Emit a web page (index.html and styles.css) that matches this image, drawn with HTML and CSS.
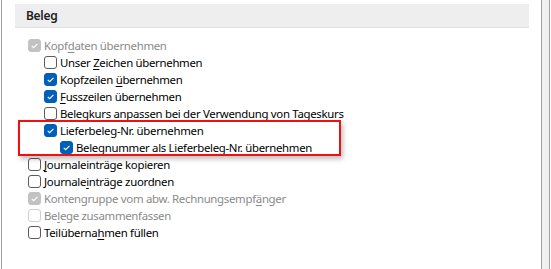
FILE: index.html
```html
<!DOCTYPE html>
<html lang="de">
<head>
    <meta charset="UTF-8">
    <title>Beleg</title>
    <link rel="stylesheet" href="styles.css">
</head>
<body>
    <div class="page">
        <div class="content">
            <div class="section-head">Beleg</div>
            <div class="options">
                <label class="opt disabled">
                    <span class="box checked"><svg viewBox="0 0 12 12"><path d="M3 6.3 L5.1 8.4 L9.2 4.1"/></svg></span>
                    <span>Kopf<u>d</u>aten übernehmen</span>
                </label>
                <label class="opt level-2">
                    <span class="box"></span>
                    <span>Unser <u>Z</u>eichen übernehmen</span>
                </label>
                <label class="opt level-2">
                    <span class="box checked"><svg viewBox="0 0 12 12"><path d="M3 6.3 L5.1 8.4 L9.2 4.1"/></svg></span>
                    <span>Kopfzeilen <u>ü</u>bernehmen</span>
                </label>
                <label class="opt level-2">
                    <span class="box checked"><svg viewBox="0 0 12 12"><path d="M3 6.3 L5.1 8.4 L9.2 4.1"/></svg></span>
                    <span><u>F</u>usszeilen übernehmen</span>
                </label>
                <label class="opt level-2">
                    <span class="box"></span>
                    <span>Bele<u>g</u>kurs anpassen bei der Verwendung von Tageskurs</span>
                </label>
                <div class="marked">
                    <label class="opt level-2">
                        <span class="box checked"><svg viewBox="0 0 12 12"><path d="M3 6.3 L5.1 8.4 L9.2 4.1"/></svg></span>
                        <span>Lieferbeleg-Nr. übernehmen</span>
                    </label>
                    <label class="opt level-3">
                        <span class="box checked"><svg viewBox="0 0 12 12"><path d="M3 6.3 L5.1 8.4 L9.2 4.1"/></svg></span>
                        <span>Belegnummer als Lieferbeleg-Nr. übernehmen</span>
                    </label>
                </div>
                <label class="opt">
                    <span class="box"></span>
                    <span><u>J</u>ournaleinträge kopieren</span>
                </label>
                <label class="opt">
                    <span class="box"></span>
                    <span>Journale<u>i</u>nträge zuordnen</span>
                </label>
                <label class="opt disabled">
                    <span class="box checked"><svg viewBox="0 0 12 12"><path d="M3 6.3 L5.1 8.4 L9.2 4.1"/></svg></span>
                    <span>Kontengruppe vom abw. Rechnungsempf<u>ä</u>nger</span>
                </label>
                <label class="opt disabled">
                    <span class="box"></span>
                    <span>Be<u>l</u>ege zusammenfassen</span>
                </label>
                <label class="opt">
                    <span class="box"></span>
                    <span>Teilüberna<u>h</u>men füllen</span>
                </label>
            </div>
        </div>
        <div class="strip"></div>
    </div>
</body>
</html>
```
FILE: styles.css
```css
body {
    margin: 0;
    padding-left: 1px;
    background-color: #fff;
    font-family: "Noto Sans", "Open Sans", sans-serif;
    font-size: 11.4px;
    letter-spacing: -0.3px;
    color: #000;
}
.page {
    display: flex;
    height: 269px;
}
.content {
    flex: 1;
    border-left: 1px solid #a0a0a0;
    padding: 4px 12px 0 0;
}
.strip {
    width: 7px;
    background-color: #f0f0f0;
    border-left: 1px solid #a0a0a0;
    border-right: 1px solid #a0a0a0;
    margin-right: 1px;
}
.section-head {
    margin-left: 13px;
    height: 23px;
    line-height: 23px;
    padding-left: 11px;
    background-color: #eeeeee;
    border-bottom: 1px solid #e0e0e0;
    font-size: 12px;
    font-weight: 600;
    color: #222;
}
.options {
    margin-top: 9px;
    padding-left: 26px;
}
.opt {
    display: flex;
    align-items: center;
    height: 17px;
    gap: 3px;
    white-space: nowrap;
}
.opt u {
    text-underline-offset: 2px;
}
.level-2 {
    margin-left: 16px;
}
.level-3 {
    margin-left: 32px;
}
.box {
    width: 13px;
    height: 13px;
    box-sizing: border-box;
    border: 1px solid #5b5b5b;
    border-radius: 3px;
    background-color: #fff;
    display: flex;
    flex-shrink: 0;
}
.box svg {
    width: 11px;
    height: 11px;
    margin: auto;
    fill: none;
    stroke: #fff;
    stroke-width: 1.2;
}
.box.checked {
    background-color: #005fb8;
    border-color: #005fb8;
}
.disabled {
    color: #8a8a8a;
}
.disabled .box {
    border-color: #cfcfcf;
}
.disabled .box.checked {
    background-color: #c2c2c2;
    border-color: #c2c2c2;
}
.marked {
    position: relative;
}
.marked::after {
    content: "";
    position: absolute;
    left: -10px;
    top: -2px;
    width: 323px;
    height: 36px;
    box-sizing: border-box;
    border: 2px solid #ee1111;
    box-shadow: 2px 3px 5px rgba(0, 0, 0, 0.25);
}
```
